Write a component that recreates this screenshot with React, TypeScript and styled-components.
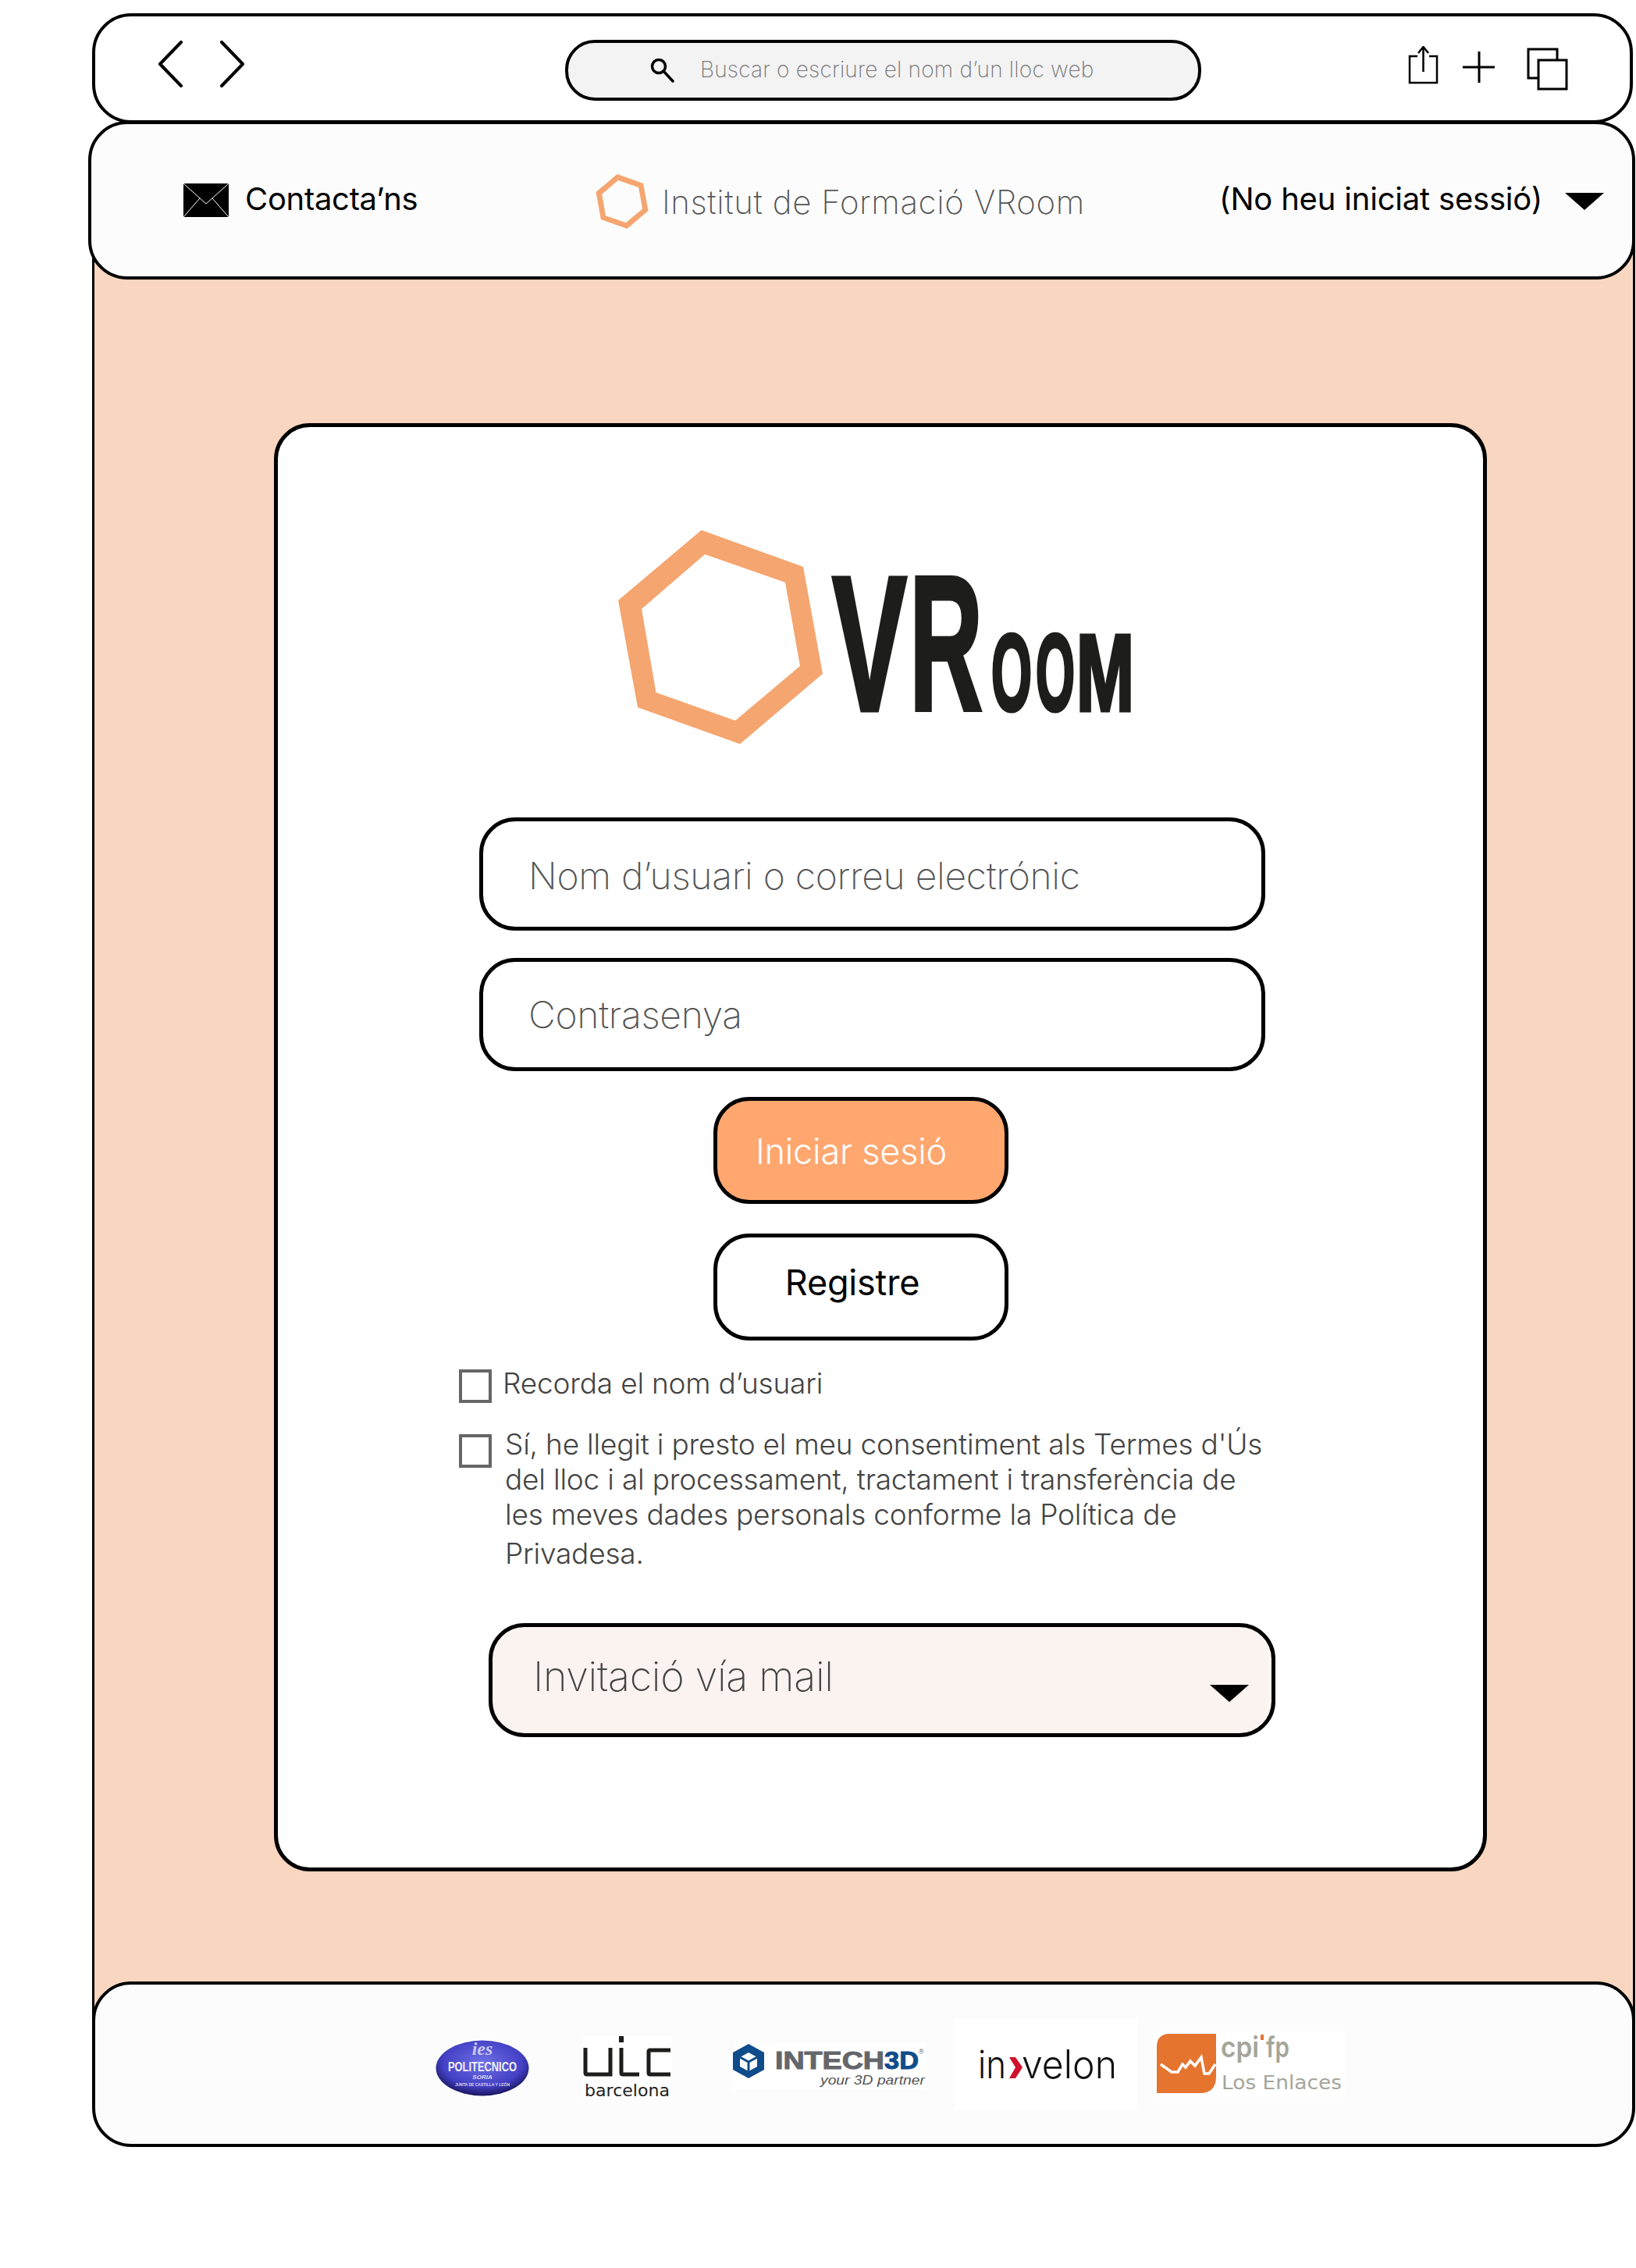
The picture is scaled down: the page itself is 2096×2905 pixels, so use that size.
import React from 'react';
import styled, { createGlobalStyle } from 'styled-components';

const Global = createGlobalStyle`
  html, body { margin: 0; padding: 0; background: #fff; }
  body { font-family: Inter, "Open Sans", "Liberation Sans", sans-serif; }
`;

const Page = styled.div`
  width: 2096px;
  height: 2905px;
  padding-top: 17px;
  box-sizing: border-box;
  overflow: hidden;
`;

const BrowserBar = styled.div`
  margin-left: 118px;
  width: 1974px;
  height: 141px;
  box-sizing: border-box;
  background: #fff;
  border: 4px solid #000;
  border-radius: 50px;
  display: flex;
  align-items: flex-start;
`;

const NavIcons = styled.svg`
  margin: 31px 0 0 81px;
  width: 110px;
  height: 60px;
  flex: none;
`;

const SearchBox = styled.div`
  margin: 30px 0 0 411px;
  width: 815px;
  height: 78px;
  box-sizing: border-box;
  background: #f3f3f3;
  border: 4px solid #000;
  border-radius: 38px;
  display: flex;
  align-items: center;
  padding-left: 105px;
  flex: none;
`;

const SearchText = styled.span`
  margin: -2px 0 0 32px;
  font-size: 28px;
  font-weight: 200;
  color: #777;
  letter-spacing: 0.2px;
  white-space: nowrap;
`;

const ToolIcons = styled.svg`
  margin: 38px 0 0 265px;
  width: 210px;
  height: 64px;
  flex: none;
`;

const Header = styled.header`
  position: relative;
  z-index: 2;
  margin: -3px 0 0 113px;
  width: 1982px;
  height: 203px;
  box-sizing: border-box;
  background: #fcfcfc;
  border: 4px solid #000;
  border-radius: 50px;
  display: flex;
  align-items: flex-start;
`;

const MailIcon = styled.svg`
  margin: 76px 0 0 118px;
  width: 58px;
  height: 43px;
  flex: none;
`;

const ContactLink = styled.span`
  margin: 72px 0 0 21px;
  width: 232px;
  font-size: 40px;
  line-height: 48px;
  font-weight: 400;
  letter-spacing: -0.3px;
  color: #000;
  white-space: nowrap;
  flex: none;
`;

const BrandMark = styled.svg`
  margin: 64px 0 0 217px;
  width: 68px;
  height: 70px;
  flex: none;
`;

const BrandName = styled.span`
  margin: 76px 0 0 17px;
  width: 714px;
  font-size: 42px;
  line-height: 48px;
  font-weight: 200;
  letter-spacing: 0.6px;
  color: #555;
  white-space: nowrap;
  flex: none;
`;

const UserStatus = styled.span`
  margin: 72px 0 0 0;
  width: 443px;
  font-size: 40px;
  line-height: 48px;
  font-weight: 400;
  letter-spacing: -0.2px;
  color: #000;
  white-space: nowrap;
  flex: none;
`;

const Caret = styled.svg`
  flex: none;
  width: 50px;
  height: 22px;
`;

const HeaderCaret = styled(Caret)`
  margin: 88px 0 0 0;
`;

const Main = styled.main`
  position: relative;
  z-index: 1;
  margin: -60px 0 0 118px;
  width: 1977px;
  height: 2300px;
  box-sizing: border-box;
  background: #f9d6c0;
  border: solid #000;
  border-width: 0 3px;
  padding: 244px 0 0 230px;
`;

const Card = styled.section`
  width: 1554px;
  height: 1855px;
  box-sizing: border-box;
  background: #fff;
  border: 5px solid #000;
  border-radius: 46px;
  display: flex;
  flex-direction: column;
  align-items: flex-start;
  padding-top: 132px;
`;

const Logo = styled.svg`
  margin-left: 436px;
  width: 664px;
  height: 276px;
  flex: none;
`;

const Field = styled.div`
  margin: ${p => p.$top}px 0 0 258px;
  width: 1007px;
  height: 145px;
  box-sizing: border-box;
  border: 5px solid #000;
  border-radius: 46px;
  background: #fff;
  display: flex;
  align-items: center;
  padding: ${p => p.$shift}px 0 0 58px;
  font-size: 48px;
  font-weight: 200;
  color: #555;
  letter-spacing: -0.3px;
  white-space: nowrap;
  flex: none;
`;

const ActionButton = styled.button`
  margin: ${p => p.$top}px 0 0 558px;
  width: 378px;
  height: 137px;
  box-sizing: border-box;
  border: 5px solid #000;
  border-radius: 46px;
  background: ${p => (p.$primary ? '#ffa76f' : '#fff')};
  color: ${p => (p.$primary ? '#fff' : '#000')};
  font-family: inherit;
  font-size: 45px;
  font-weight: ${p => (p.$primary ? 300 : 400)};
  letter-spacing: -0.2px;
  padding: ${p => (p.$primary ? '2px 25px 0 0' : '0 22px 12px 0')};
  flex: none;
`;

const CheckRow = styled.div`
  margin: ${p => p.$top}px 0 0 232px;
  display: flex;
  align-items: flex-start;
  color: #444;
  font-size: 37px;
  line-height: 45px;
  font-weight: 300;
  letter-spacing: -0.2px;
  white-space: nowrap;
  flex: none;
`;

const CheckBox = styled.span`
  display: block;
  width: 42px;
  height: 43px;
  box-sizing: border-box;
  border: 4px solid #666;
  background: #fff;
  flex: none;
  margin-top: ${p => p.$top}px;
`;

const RememberLabel = styled.span`
  margin: -5px 0 0 14px;
`;

const Consent = styled.div`
  margin-left: 17px;
`;

const ConsentLine = styled.div`
  margin-top: ${p => p.$top || 0}px;
`;

const LoginSelect = styled.div`
  margin: 67px 0 0 270px;
  width: 1008px;
  height: 146px;
  box-sizing: border-box;
  border: 5px solid #000;
  border-radius: 46px;
  background: #fbf3f0;
  display: flex;
  align-items: flex-start;
  flex: none;
`;

const SelectText = styled.span`
  margin: 34px 0 0 52px;
  width: 867px;
  font-size: 52px;
  line-height: 60px;
  font-weight: 200;
  color: #444;
  letter-spacing: -0.3px;
  white-space: nowrap;
  flex: none;
`;

const SelectCaret = styled(Caret)`
  margin-top: 74px;
`;

const Footer = styled.footer`
  position: relative;
  z-index: 2;
  margin: -60px 0 0 118px;
  width: 1977px;
  height: 212px;
  box-sizing: border-box;
  background: #fcfcfc;
  border: 4px solid #000;
  border-radius: 50px;
  display: flex;
  align-items: flex-start;
  padding-left: 436px;
`;

const FooterLogo = styled.svg`
  flex: none;
  width: ${p => p.$w}px;
  height: ${p => p.$h}px;
  margin-top: ${p => p.$top}px;
  margin-right: ${p => p.$after}px;
`;

const hexOuter = '106.6,0 237,47 262,184 156,274 25,227 0,90';
const hexInner = '111,31 214,67 233,174 150,244 48.5,208 30,101';

export default function App() {
  return (
    <Page>
      <Global />
      <BrowserBar>
        <NavIcons viewBox="0 0 110 60" fill="none" stroke="#000" strokeWidth="4" strokeLinecap="round" strokeLinejoin="round">
          <path d="M29 2 L2 30 L29 58" />
          <path d="M81 2 L108 30 L81 58" />
        </NavIcons>
        <SearchBox>
          <svg width="32" height="32" viewBox="0 0 32 32" fill="none" stroke="#000" strokeWidth="3.5" strokeLinecap="round">
            <circle cx="11" cy="11" r="8.5" />
            <path d="M17 17 L29 30" />
          </svg>
          <SearchText>Buscar o escriure el nom d’un lloc web</SearchText>
        </SearchBox>
        <ToolIcons viewBox="0 0 210 64" fill="none" stroke="#000" strokeWidth="3">
          <path d="M12 13 H2 V47 H37 V13 H27" strokeWidth="2.5" />
          <path d="M19.5 33 V2 M13 9 L19.5 1 L26 9" strokeWidth="2.5" />
          <path d="M91 7 V47 M70 27 H111" />
          <path d="M167 41 H154 V4 H191 V18" />
          <rect x="167" y="18" width="36" height="37" />
        </ToolIcons>
      </BrowserBar>
      <Header>
        <MailIcon viewBox="0 0 58 43">
          <rect width="58" height="43" fill="#000" />
          <path d="M0 0 L29 26 L58 0 M0 43 L21 19 M58 43 L37 19" fill="none" stroke="#fff" strokeWidth="1" />
        </MailIcon>
        <ContactLink>Contacta’ns</ContactLink>
        <BrandMark viewBox="0 0 262 274">
          <polygon points={hexOuter} fill="#f5a56f" />
          <polygon points={hexInner} fill="#fcfcfc" />
        </BrandMark>
        <BrandName>Institut de Formació VRoom</BrandName>
        <UserStatus>(No heu iniciat sessió)</UserStatus>
        <HeaderCaret viewBox="0 0 50 22"><path d="M0 0 H50 L25 22 Z" fill="#000" /></HeaderCaret>
      </Header>
      <Main>
        <Card>
          <Logo viewBox="0 0 664 276">
            <polygon points={hexOuter} fill="#f5a56f" />
            <polygon points={hexInner} fill="#fff" />
            <g fontFamily="Liberation Sans Narrow, Liberation Sans, sans-serif" fontWeight="700" fill="#1d1d1b" stroke="#1d1d1b" strokeWidth="5">
              <text x="274" y="231" fontSize="247" textLength="96" lengthAdjust="spacingAndGlyphs">V</text>
              <text x="373" y="231" fontSize="247" textLength="94" lengthAdjust="spacingAndGlyphs">R</text>
              <text x="478" y="231" fontSize="140" textLength="52" lengthAdjust="spacingAndGlyphs">O</text>
              <text x="535" y="231" fontSize="140" textLength="50" lengthAdjust="spacingAndGlyphs">O</text>
              <text x="587" y="231" fontSize="140" textLength="74" lengthAdjust="spacingAndGlyphs">M</text>
            </g>
          </Logo>
          <Field $top={92} $shift={3}>Nom d’usuari o correu electrónic</Field>
          <Field $top={35} $shift={0}>Contrasenya</Field>
          <ActionButton $top={33} $primary>Iniciar sesió</ActionButton>
          <ActionButton $top={38}>Registre</ActionButton>
          <CheckRow $top={37}>
            <CheckBox $top={0} />
            <RememberLabel>Recorda el nom d’usuari</RememberLabel>
          </CheckRow>
          <CheckRow $top={30}>
            <CheckBox $top={10} />
            <Consent>
              <ConsentLine>Sí, he llegit i presto el meu consentiment als Termes d'Ús</ConsentLine>
              <ConsentLine>del lloc i al processament, tractament i transferència de</ConsentLine>
              <ConsentLine>les meves dades personals conforme la Política de</ConsentLine>
              <ConsentLine $top={5}>Privadesa.</ConsentLine>
            </Consent>
          </CheckRow>
          <LoginSelect>
            <SelectText>Invitació vía mail</SelectText>
            <SelectCaret viewBox="0 0 50 22"><path d="M0 0 H50 L25 22 Z" fill="#000" /></SelectCaret>
          </LoginSelect>
        </Card>
      </Main>
      <Footer>
        <FooterLogo $w={120} $h={72} $top={71} $after={69} viewBox="0 0 120 72">
          <defs>
            <radialGradient id="ies" cx="50%" cy="40%" r="60%">
              <stop offset="0%" stopColor="#6f70e6" />
              <stop offset="72%" stopColor="#4340c4" />
              <stop offset="100%" stopColor="#1a1660" />
            </radialGradient>
          </defs>
          <ellipse cx="60" cy="36" rx="59.5" ry="35.5" fill="url(#ies)" />
          <text x="60" y="19" textAnchor="middle" fontFamily="Liberation Serif, serif" fontStyle="italic" fontWeight="700" fontSize="24" fill="#c9c9ef">ies</text>
          <text x="60" y="40" textAnchor="middle" fontFamily="Liberation Sans, sans-serif" fontWeight="700" fontSize="16" textLength="88" lengthAdjust="spacingAndGlyphs" fill="#f2f2f8">POLITECNICO</text>
          <text x="60" y="50" textAnchor="middle" fontFamily="Liberation Sans, sans-serif" fontStyle="italic" fontWeight="700" fontSize="8" fill="#dcdcf4">SORIA</text>
          <text x="60" y="59" textAnchor="middle" fontFamily="Liberation Sans, sans-serif" fontWeight="700" fontSize="5" fill="#d8d8f0">JUNTA DE CASTILLA Y LEÓN</text>
        </FooterLogo>
        <FooterLogo $w={114} $h={80} $top={66} $after={78} viewBox="0 0 114 80">
          <rect width="114" height="80" fill="#fff" />
          <g fill="none" stroke="#1d1d1b" strokeWidth="5">
            <path d="M3 15 V47 Q3 49 5 49 H35 V15" />
            <path d="M49 15 V47 Q49 49 51 49 H72" />
            <path d="M112 18 H86 Q84 18 84 20 V47 Q84 49 86 49 H112" />
          </g>
          <rect x="46" y="0" width="6" height="8" fill="#1d1d1b" />
          <text x="2" y="77" fontFamily="DejaVu Sans, sans-serif" fontSize="21" textLength="109" lengthAdjust="spacingAndGlyphs" fill="#222">barcelona</text>
        </FooterLogo>
        <FooterLogo $w={248} $h={60} $top={75} $after={36} viewBox="0 0 248 60">
          <rect width="248" height="60" fill="#fff" />
          <path d="M20 1 L40 12 V34 L20 45 L0 34 V12 Z" fill="#0f4c8a" />
          <path d="M20 12 L31 18 V30 L20 36 L9 30 V18 Z" fill="#fff" />
          <path d="M20 24 V36 M9 18 L20 24 L31 18" stroke="#0f4c8a" strokeWidth="3" fill="none" />
          <text x="54" y="33" fontFamily="Liberation Sans, sans-serif" fontWeight="700" fontSize="32" textLength="140" lengthAdjust="spacingAndGlyphs" fill="#63666a" stroke="#63666a" strokeWidth="1">INTECH</text>
          <text x="194" y="33" fontFamily="Liberation Sans, sans-serif" fontWeight="700" fontSize="32" textLength="44" lengthAdjust="spacingAndGlyphs" fill="#0f4c8a" stroke="#0f4c8a" strokeWidth="1">3D</text>
          <text x="238" y="14" fontFamily="Liberation Sans, sans-serif" fontSize="9" fill="#63666a">®</text>
          <text x="112" y="53" fontFamily="Liberation Sans, sans-serif" fontStyle="italic" fontSize="17" textLength="134" lengthAdjust="spacingAndGlyphs" fill="#555">your 3D partner</text>
        </FooterLogo>
        <FooterLogo $w={234} $h={116} $top={44} $after={20} viewBox="0 0 234 116">
          <rect width="234" height="116" fill="#fff" />
          <text x="30" y="76" fontFamily="Inter, sans-serif" fontWeight="300" fontSize="50" textLength="36" lengthAdjust="spacingAndGlyphs" fill="#111">in</text>
          <path d="M70 49 L78 49 L87 62 L78 76 L70 76 L78 62 Z" fill="#d0102c" />
          <text x="86" y="76" fontFamily="Inter, sans-serif" fontWeight="300" fontSize="50" textLength="122" lengthAdjust="spacingAndGlyphs" fill="#111">velon</text>
        </FooterLogo>
        <FooterLogo $w={247} $h={83} $top={60} $after={0} viewBox="0 0 247 83">
          <rect width="247" height="83" fill="#fff" />
          <path d="M22 3 H81 V58 Q81 79 60 79 H5 V20 Q5 3 22 3 Z" fill="#e5742e" />
          <path d="M10 42 L24 52 L32 52 L38 42 L42 46 L48 38 L54 44 L62 33 L66 54 L72 54 L80 42" fill="none" stroke="#fff" strokeWidth="3.5" />
          <text x="87" y="33" fontFamily="Inter, sans-serif" fontWeight="600" fontSize="36" textLength="49" lengthAdjust="spacingAndGlyphs" fill="#a5a599">cpi</text>
          <rect x="138" y="4" width="4" height="7" fill="#e5742e" />
          <text x="145" y="33" fontFamily="Inter, sans-serif" fontWeight="600" fontSize="36" textLength="30" lengthAdjust="spacingAndGlyphs" fill="#a5a599">fp</text>
          <text x="88" y="74" fontFamily="DejaVu Sans, sans-serif" fontSize="24" textLength="154" lengthAdjust="spacingAndGlyphs" fill="#a5a599">Los Enlaces</text>
        </FooterLogo>
      </Footer>
    </Page>
  );
}
